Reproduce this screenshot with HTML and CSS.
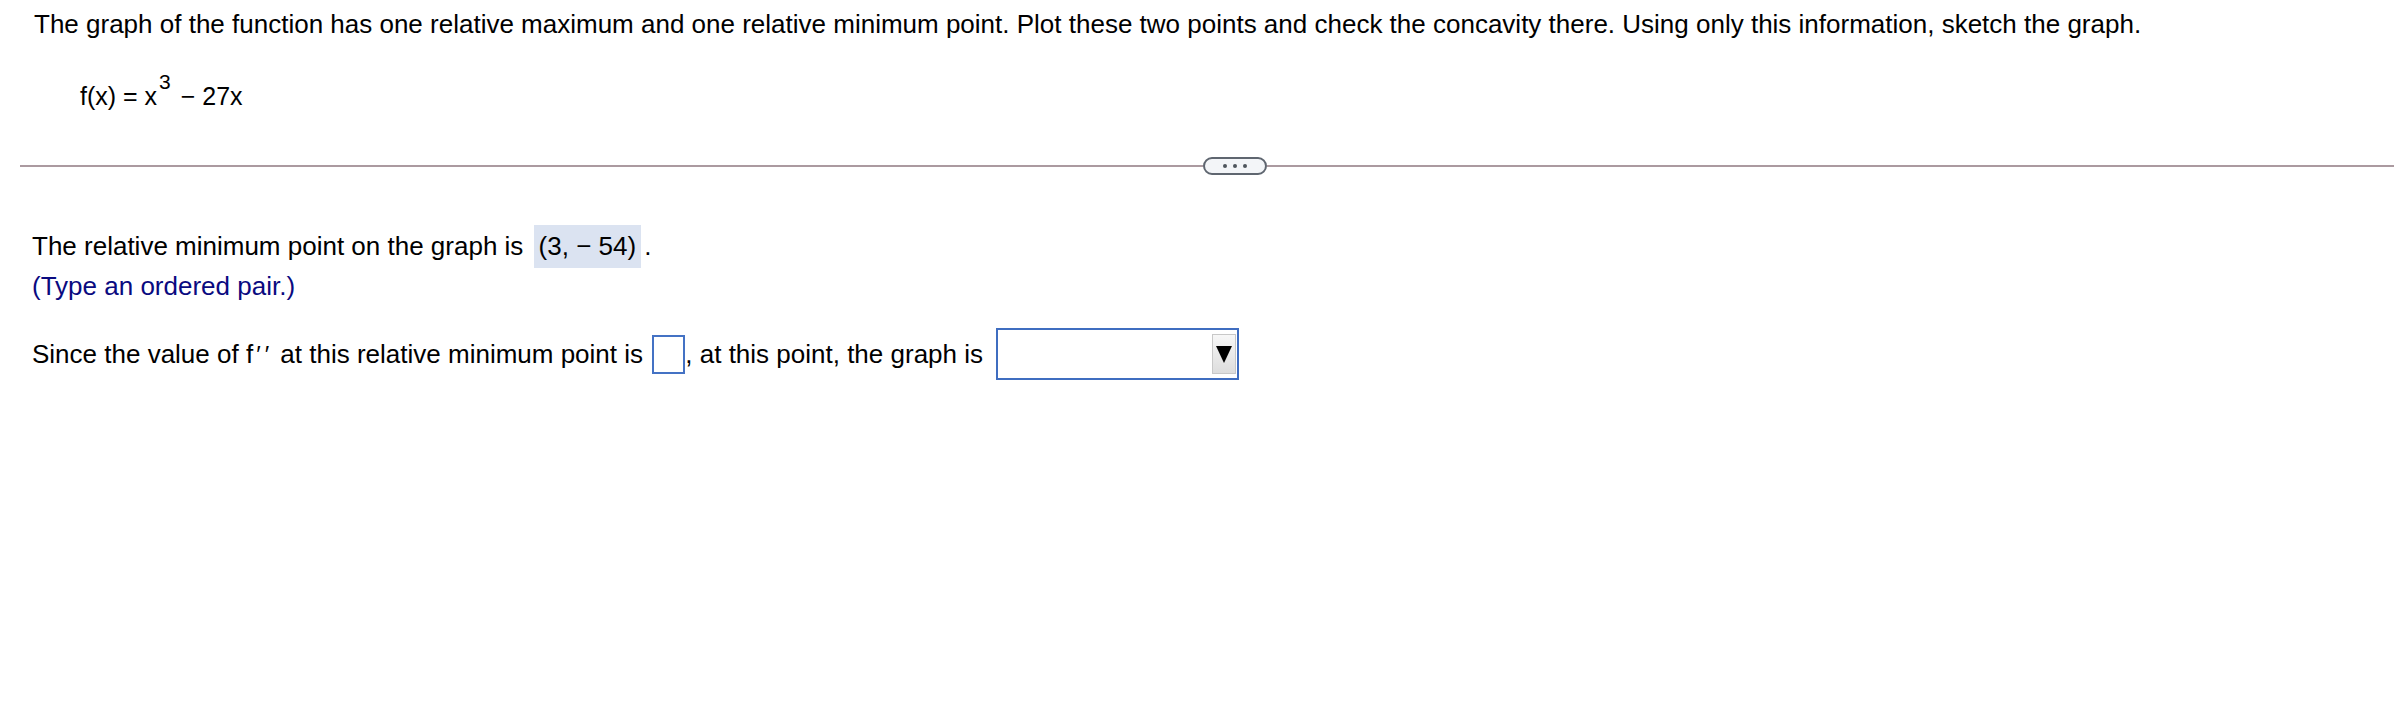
FILE: index.html
```html
<!DOCTYPE html>
<html>
<head>
<meta charset="utf-8">
<link rel="stylesheet" href="styles.css">
</head>
<body>
<div class="page">
  <p class="prompt">The graph of the function has one relative maximum and one relative minimum point. Plot these two points and check the concavity there. Using only this information, sketch the graph.</p>
  <div class="func">f(x) = x<span class="sup">3</span> − 27x</div>
  <div class="divider">
    <span class="line line-left"></span>
    <span class="pill"><span class="dot"></span><span class="dot"></span><span class="dot"></span></span>
    <span class="line line-right"></span>
  </div>
  <div class="answers">
    <p class="row">The relative minimum point on the graph is <span class="ans">(3, − 54)</span>.</p>
    <p class="hint">(Type an ordered pair.)</p>
    <p class="row q">Since the value of f<span class="primes">′′</span> at this relative minimum point is <span class="box"></span>, at this point, the graph is <span class="select"><span class="arrow"><span class="tri"></span></span></span></p>
  </div>
</div>
</body>
</html>
```

FILE: styles.css
```css
html, body {
  margin: 0;
  padding: 0;
  background: #ffffff;
}
body {
  font-family: "Liberation Sans", Arial, sans-serif;
  font-size: 26px;
  color: #000000;
}
.page {
  padding-top: 9px;
}
.prompt {
  margin: 0;
  padding-left: 34px;
  line-height: 30px;
}
.func {
  margin-top: 42px;
  padding-left: 80px;
  font-size: 25px;
  line-height: 31px;
}
.sup {
  position: relative;
  top: -16px;
  font-size: 21px;
  margin-left: 2px;
  margin-right: 3px;
}
.divider {
  margin-top: 44px;
  display: flex;
  align-items: center;
  padding-left: 20px;
  height: 18px;
}
.line {
  height: 2px;
  background: #ab9aa0;
}
.line-left {
  width: 1183px;
}
.line-right {
  flex: 1;
}
.pill {
  box-sizing: border-box;
  width: 64px;
  height: 18px;
  border: 2px solid #5f6670;
  border-radius: 9px;
  background: #f3f5f8;
  display: flex;
  align-items: center;
  justify-content: center;
  gap: 6px;
}
.dot {
  width: 4px;
  height: 4px;
  border-radius: 50%;
  background: #4f555d;
}
.answers {
  padding-left: 32px;
  margin-top: 50px;
}
.row {
  margin: 0;
  line-height: 43px;
}
.ans {
  display: inline-block;
  background: #dbe3f1;
  padding: 0 5px;
  margin-left: 3px;
  margin-right: 3px;
  line-height: 43px;
}
.hint {
  margin: 3px 0 0 0;
  color: #0a0a80;
  line-height: 30px;
}
.q {
  margin-top: 27px;
  display: flex;
  align-items: center;
  white-space: pre;
}
.primes {
  font-size: 24px;
  letter-spacing: 4px;
  margin-left: 3px;
}
.box {
  display: inline-block;
  box-sizing: border-box;
  width: 33px;
  height: 39px;
  border: 2px solid #4472c4;
  background: #fff;
  margin-left: 2px;
}
.select {
  display: inline-flex;
  justify-content: flex-end;
  align-items: center;
  box-sizing: border-box;
  width: 243px;
  height: 52px;
  border: 2px solid #3f6dc0;
  background: #fff;
  margin-left: 6px;
  padding-right: 1px;
}
.arrow {
  box-sizing: border-box;
  width: 24px;
  height: 40px;
  background: linear-gradient(#f7f7f7, #dddddd);
  border: 1px solid #c8c8c8;
  display: flex;
  align-items: center;
  justify-content: center;
}
.tri {
  width: 0;
  height: 0;
  border-left: 8px solid transparent;
  border-right: 8px solid transparent;
  border-top: 17px solid #000;
}
```
